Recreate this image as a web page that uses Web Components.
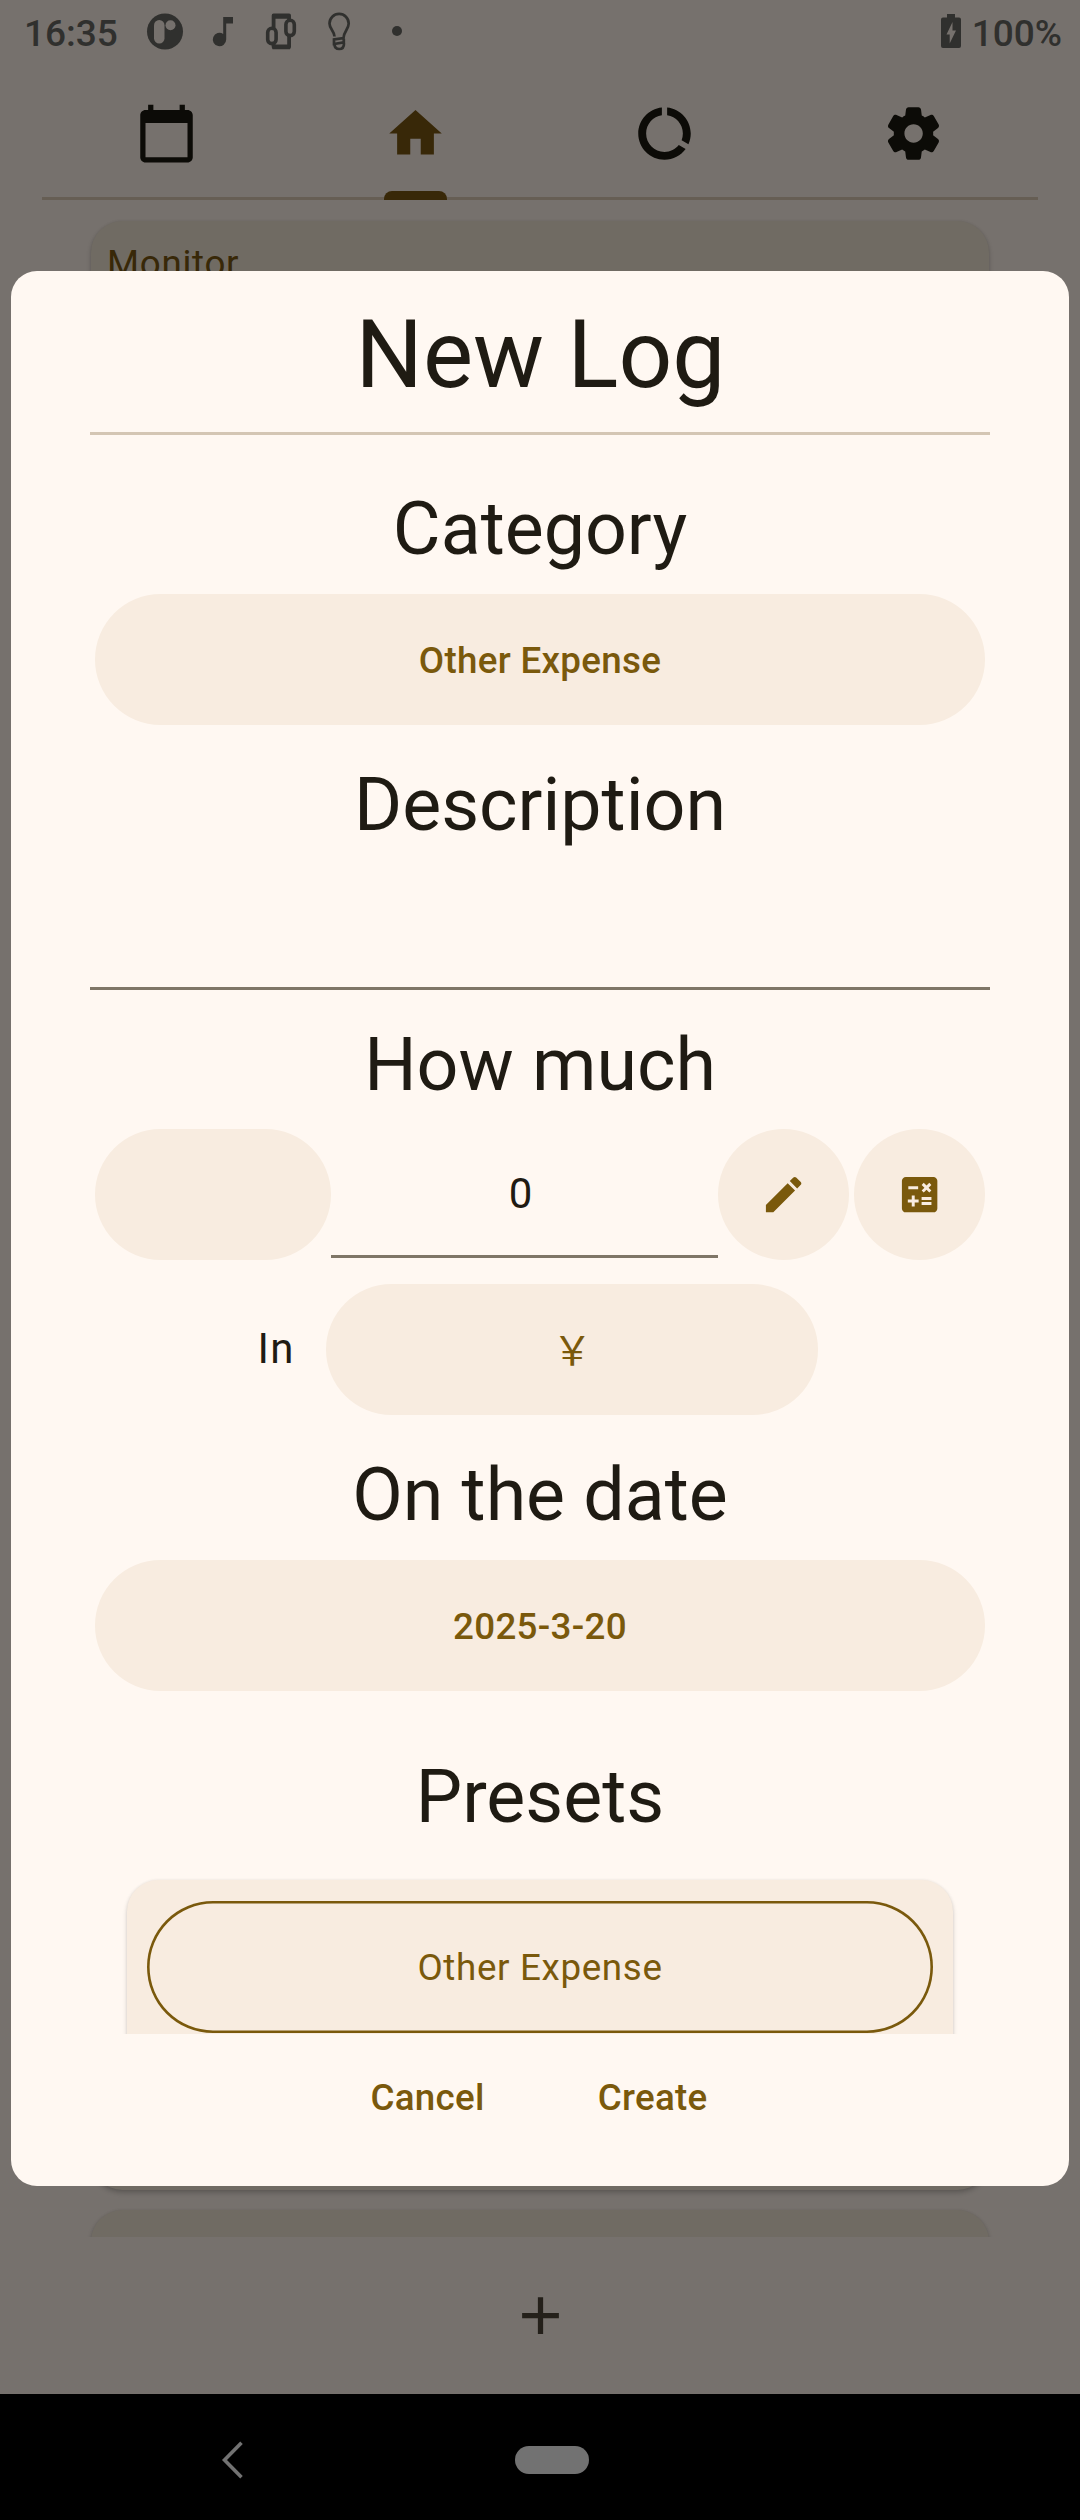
<!DOCTYPE html>
<html lang="en">
<head>
<meta charset="utf-8">
<title>New Log</title>
<style>
html,body{margin:0;padding:0}
body{width:1080px;height:2520px;overflow:hidden;background:#76716d;font-family:Roboto,"Noto Sans CJK SC",sans-serif;
--surface:#fff8f2;--tonal:#f8ece0;--primary:#7a590c;--ink:#1f1b13;--dim:#76716d;--dim-card:#706b63}
</style>
</head>
<body>
<log-app></log-app>
<script>
function define(name, html) {
  const tpl = document.createElement('template');
  tpl.innerHTML = html;
  customElements.define(name, class extends HTMLElement {
    constructor() {
      super();
      this.attachShadow({ mode: 'open' }).appendChild(tpl.content.cloneNode(true));
    }
  });
}

const ICONS = {
  calendar: 'M20 3h-1V1h-2v2H7V1H5v2H4c-1.1 0-2 .9-2 2v16c0 1.1.9 2 2 2h16c1.1 0 2-.9 2-2V5c0-1.1-.9-2-2-2zm0 18H4V8h16v13z',
  home: 'M10 20v-6h4v6h5v-8h3L12 3 2 12h3v8z',
  usage: 'M13 2.05v3.03c3.39.49 6 3.39 6 6.92 0 .9-.18 1.75-.48 2.54l2.6 1.53c.56-1.24.88-2.62.88-4.07 0-5.18-3.95-9.45-9-9.95zM12 19c-3.87 0-7-3.13-7-7 0-3.53 2.61-6.43 6-6.92V2.05c-5.06.5-9 4.76-9 9.95 0 5.52 4.47 10 9.99 10 3.31 0 6.24-1.61 8.06-4.09l-2.6-1.53C16.17 17.98 14.21 19 12 19z',
  settings: 'M19.5 12c0-.23-.01-.45-.03-.68l1.86-1.41c.4-.3.51-.86.26-1.3l-1.87-3.23c-.25-.44-.79-.62-1.25-.42l-2.15.91c-.37-.26-.76-.49-1.17-.68l-.29-2.31c-.06-.5-.49-.88-.99-.88h-3.73c-.51 0-.94.38-1 .88l-.29 2.31c-.41.19-.8.42-1.17.68l-2.15-.91c-.46-.2-1-.02-1.25.42L2.41 8.62c-.25.44-.14.99.26 1.3l1.86 1.41c-.02.22-.03.44-.03.67s.01.45.03.68l-1.86 1.41c-.4.3-.51.86-.26 1.3l1.87 3.23c.25.44.79.62 1.25.42l2.15-.91c.37.26.76.49 1.17.68l.29 2.31c.06.5.49.88.99.88h3.73c.5 0 .93-.38.99-.88l.29-2.31c.41-.19.8-.42 1.17-.68l2.15.91c.46.2 1 .02 1.25-.42l1.87-3.23c.25-.44.14-.99-.26-1.3l-1.86-1.41c.03-.23.04-.45.04-.68zm-7.46 3.5c-1.93 0-3.5-1.57-3.5-3.5s1.57-3.5 3.5-3.5 3.5 1.57 3.5 3.5-1.57 3.5-3.5 3.5z',
  edit: 'M3 17.25V21h3.75L17.81 9.94l-3.75-3.75L3 17.25zM20.71 7.04c.39-.39.39-1.02 0-1.41l-2.34-2.34c-.39-.39-1.02-.39-1.41 0l-1.83 1.83 3.75 3.75 1.83-1.83z',
  calculate: 'M19 3H5c-1.1 0-2 .9-2 2v14c0 1.1.9 2 2 2h14c1.1 0 2-.9 2-2V5c0-1.1-.9-2-2-2zm-5.97 4.06L14.09 6l1.41 1.41L16.91 6l1.06 1.06-1.41 1.41 1.41 1.41-1.06 1.06-1.41-1.4-1.41 1.41-1.06-1.06 1.41-1.41-1.41-1.42zm-6.78.66h5v1.5h-5v-1.5zM11.5 16h-2v2H8v-2H6v-1.5h2v-2h1.5v2h2V16zm6.5 1.25h-5v-1.5h5v1.5zm0-2.5h-5v-1.5h5v1.5z',
  add: 'M19 13h-6v6h-2v-6H5v-2h6V5h2v6h6v2z'
};
customElements.define('m-icon', class extends HTMLElement {
  constructor() { super(); this.attachShadow({ mode: 'open' }); }
  connectedCallback() {
    this.shadowRoot.innerHTML = `<style>:host{display:block;width:63px;height:63px}svg{display:block;width:100%;height:100%;fill:currentColor}</style>
<svg viewBox="0 0 24 24"><path d="${ICONS[this.getAttribute('name')]}"/></svg>`;
  }
});

define('status-bar', `<style>
:host{display:flex;justify-content:space-between;height:66px;padding:0 18px 0 24px;box-sizing:border-box;color:#30302e;font-size:37px;font-weight:500;line-height:67px}
.l,.r{display:flex}.l{gap:27px}.r{gap:10px}svg{display:block}
</style>
<div class="l"><span>16:35</span>
<svg width="260" height="66" viewBox="145 0 260 66" fill="none" stroke="#30302e" stroke-width="2.6">
<circle cx="165" cy="31.5" r="18" fill="#30302e" stroke="none"/>
<rect x="154" y="20" width="10.500" height="23.500" rx="5.200" fill="#76716d" stroke="none"/><circle cx="170.500" cy="25.200" r="5" fill="#76716d" stroke="none"/>
<path d="M223.200 17H233v6.500h-6.800V39.500a6.700 6.700 0 1 1-3-5.600z" fill="#30302e" stroke="none"/>
<path d="M273.600 28V15.500h15.500v5M289.100 36v11h-15.500v-3" stroke-width="3.800" stroke-linejoin="round"/>
<path d="M272.500 14h17.500v4.800h-17.500zM272.500 44.500h17.500v4.800h-17.500z" fill="#30302e" stroke="none"/>
<rect x="267.700" y="28.200" width="8.400" height="15.400" rx="4.200" stroke-width="3.600"/><rect x="285.900" y="20.200" width="8.400" height="15.400" rx="4.200" stroke-width="3.600"/>
<path d="M334.500 36.500c0-5-5-7.500-5-13a9.600 9.600 0 0 1 19.200 0c0 5.500-5 8-5.200 14.500l-9.500 1.500v4.500l9.800-1.700v-3.500M334.500 44c0 3.500 2 5 4.800 5s4.700-2 4.700-5.500" stroke-width="2.700"/>
<circle cx="397" cy="31" r="5" fill="#30302e" stroke="none"/>
</svg></div>
<div class="r"><svg width="22" height="66" viewBox="940 0 22 66"><path fill="#30302e" fill-rule="evenodd" d="M947 14h8v3.500h4a2 2 0 0 1 2 2V46a2 2 0 0 1-2 2h-16a2 2 0 0 1-2-2V19.500a2 2 0 0 1 2-2h4zM952.500 22l-6 12.500h3.200V43.500l6.300-13h-3.500z"/></svg><span>100%</span></div>`);

define('tab-item', `<style>
:host{display:flex;flex:1;flex-direction:column;align-items:center;justify-content:flex-end;gap:26px;color:#0c0b07}
i{display:block;width:63px;height:9px;border-radius:8px 8px 0 0}
:host([active]){color:#382808}:host([active]) i{background:#382808}
</style><slot></slot><i></i>`);

define('tab-bar', `<style>
:host{display:flex;height:134px;margin:0 42px;background:linear-gradient(#665e54,#665e54) bottom/100% 3px no-repeat}
::slotted(:nth-child(even)){padding-left:1px}
</style><slot></slot>`);

define('back-card', `<style>
:host{display:block;box-sizing:border-box;margin:0 91px;background:var(--dim-card);border-radius:31.500px;color:#382808;font-size:36.750px;letter-spacing:.7px;box-shadow:0 3px 5px rgba(0,0,0,.2),0 0 3px rgba(0,0,0,.07);padding:21px 16px}
</style><slot></slot>`);

define('nav-bar', `<style>
:host{display:grid;grid-template-columns:465px 174px 441px;align-items:center;justify-items:center;box-sizing:border-box;height:126px;padding-top:6px;background:#000}
.h{width:74px;height:27.500px;border-radius:14px;background:#727272}
svg{display:block}
</style><svg width="24" height="40" viewBox="0 0 24 40" fill="none" stroke="#727272" stroke-width="3.600"><path d="M20.500 2.800L3.500 20l17 17.200"/></svg><div class="h"></div>`);

define('tonal-button', `<style>
:host{display:flex;align-items:center;justify-content:center;box-sizing:border-box;height:131.250px;margin:0 5px;border-radius:66px;background:var(--tonal);color:var(--primary);font-size:36.750px;font-weight:500;letter-spacing:.3px;padding-top:2px}
:host([round]){width:131.250px;margin:0;padding:0}
:host([round]) ::slotted(m-icon){width:47.250px;height:47.250px}
</style><slot></slot>`);

define('section-title', `<style>
:host{display:block;text-align:center;font-size:73.500px;line-height:98px;color:var(--ink)}
</style><slot></slot>`);

define('text-field', `<style>
:host{display:flex;align-items:center;justify-content:center;box-sizing:border-box;border-bottom:3px solid #7f7667;color:var(--ink);font-size:42px;letter-spacing:1.300px}
</style><slot></slot>`);

define('preset-card', `<style>
:host{display:block;box-sizing:border-box;height:260px;margin:34px 37px 0;padding:21px 20px;border-radius:31.500px;background:var(--tonal);box-shadow:0 3px 5px rgba(0,0,0,.16),0 0 3px rgba(0,0,0,.07)}
div{display:flex;align-items:center;justify-content:center;box-sizing:border-box;height:131.500px;padding-top:1px;box-shadow:inset 0 0 0 2.600px var(--primary);border-radius:66px;color:var(--primary);font-size:36.750px;letter-spacing:.66px}
</style><div><slot></slot></div>`);

define('log-dialog', `<style>
:host{display:flex;flex-direction:column;position:absolute;left:11px;top:271px;width:1058px;height:1915px;border-radius:26px;background:var(--surface);overflow:hidden;color:var(--ink)}
header{display:flex;align-items:center;justify-content:center;box-sizing:border-box;height:164px;margin:0 79px;padding:6px 0 0 1px;border-bottom:3px solid #d4c6b4;font-size:94.500px;line-height:120px}
main{height:1599px;padding:45px 79px 0;box-sizing:border-box;overflow:hidden}
footer{display:flex;justify-content:center;gap:113px;padding:42px 2px 0 0;color:var(--primary);font-size:36.750px;font-weight:500;line-height:44px;letter-spacing:.3px}
</style>
<header><slot name="title"></slot></header><main><slot></slot></main><footer><slot name="actions"></slot></footer>`);

define('log-app', `<style>
:host{display:block;position:relative;width:1080px;height:2520px;overflow:hidden;background:var(--dim)}
.page{display:flex;flex-direction:column;height:2520px}
.list{height:2037px;overflow:hidden;padding-top:21px;box-sizing:border-box;display:flex;flex-direction:column;gap:20px}
.c1{flex:none;height:1969px}.c2{flex:none;height:200px}
.add{flex:1;display:flex;align-items:center;justify-content:center;color:#24201a}
.row{display:flex}
.t{margin-bottom:15.750px}
.desc{height:136px;margin-bottom:26px}
.amount{margin:0 5px;height:131.250px}
.amount tonal-button:first-child{width:236px;margin:0}
.amount text-field{flex:1;height:129px;padding:2px 6px 0 0}
.amount tonal-button:last-child{margin-left:5px}
.cur{margin:23.500px 0 31px;align-items:center}
.cur span{width:230.700px;text-align:right;padding:0 26px 2px 0;box-sizing:border-box;flex:none;font-size:42px;letter-spacing:1.300px}
.cur tonal-button{width:492px;padding:0 0 4px 1px;font-family:"Noto Sans CJK SC",sans-serif;font-weight:400;font-size:39.500px;letter-spacing:0}
</style>
<div class="page">
<status-bar></status-bar>
<tab-bar><tab-item><m-icon name="calendar"></m-icon></tab-item><tab-item active><m-icon name="home"></m-icon></tab-item><tab-item><m-icon name="usage"></m-icon></tab-item><tab-item><m-icon name="settings"></m-icon></tab-item></tab-bar>
<div class="list"><back-card class="c1">Monitor</back-card><back-card class="c2"></back-card></div>
<div class="add"><m-icon name="add"></m-icon></div>
<nav-bar></nav-bar>
</div>
<log-dialog>
<span slot="title">New Log</span>
<section-title class="t">Category</section-title>
<tonal-button>Other Expense</tonal-button>
<section-title style="margin-top:31px">Description</section-title>
<text-field class="desc"></text-field>
<section-title style="margin-bottom:15px">How much</section-title>
<div class="row amount"><tonal-button></tonal-button><text-field>0</text-field><tonal-button round><m-icon name="edit"></m-icon></tonal-button><tonal-button round><m-icon name="calculate"></m-icon></tonal-button></div>
<div class="row cur"><span>In</span><tonal-button>￥</tonal-button></div>
<section-title class="t">On the date</section-title>
<tonal-button>2025-3-20</tonal-button>
<section-title style="margin-top:57px">Presets</section-title>
<preset-card>Other Expense</preset-card>
<span slot="actions">Cancel</span><span slot="actions">Create</span>
</log-dialog>`);
</script>
</body>
</html>
